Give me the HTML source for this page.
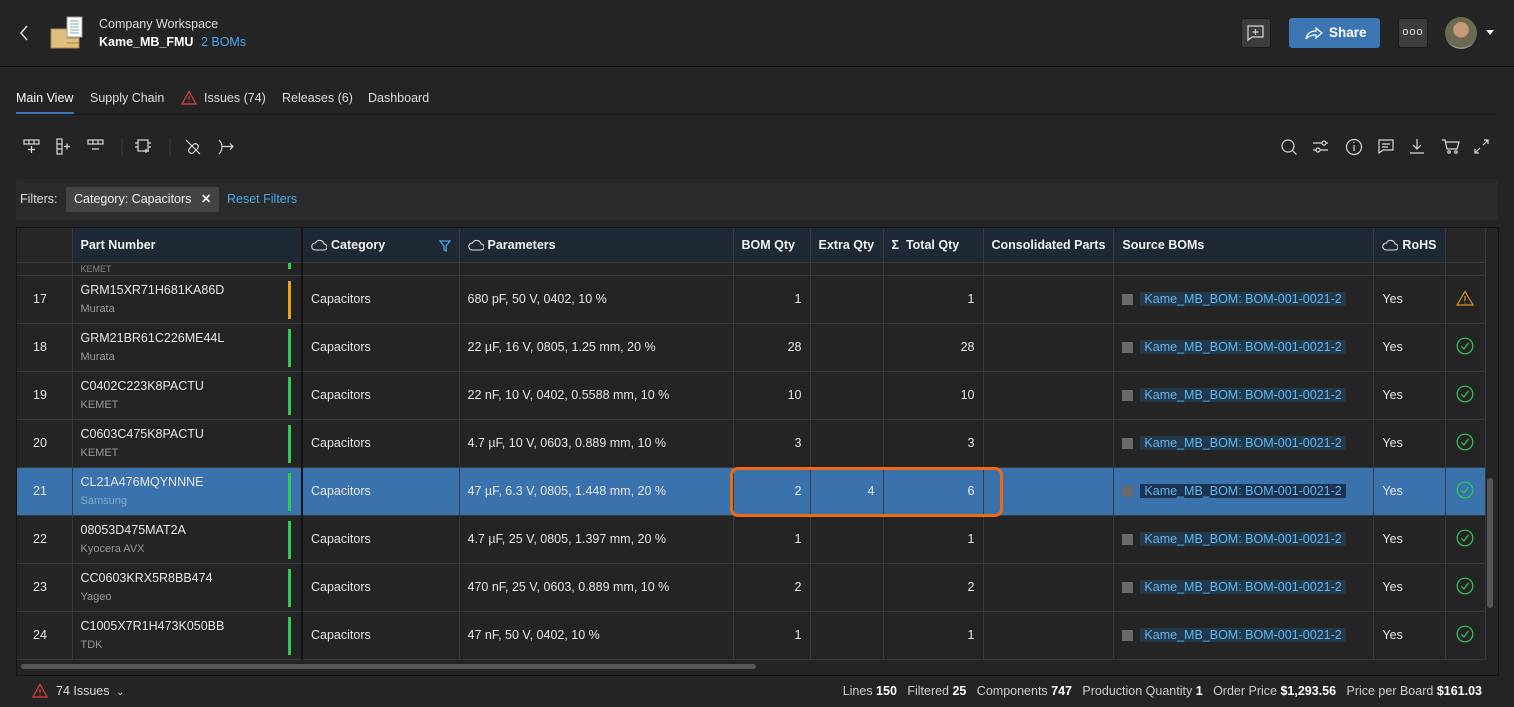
<!DOCTYPE html>
<html><head><meta charset="utf-8"><style>
*{box-sizing:border-box;margin:0;padding:0}
body{width:1514px;height:707px;background:#242424;font-family:"Liberation Sans",sans-serif;color:#e6e6e6;font-size:12.5px;position:relative;overflow:hidden}
.a{position:absolute}
.ib{stroke:#d8d8d8;fill:none;stroke-width:1.2}
table{border-collapse:collapse;table-layout:fixed;position:absolute;left:17px;top:228px}
td,th{border-right:1px solid #3a3a3a;border-bottom:1px solid #3a3a3a;white-space:nowrap;overflow:hidden;padding:0 8px;text-align:left}
th{height:34px;background:#1f2935;font-weight:bold;font-size:12.5px;color:#f0f0f0}
td{height:48px;font-size:12.5px}
td:first-child{padding-left:16px}
tr.p td{height:13px}
.r{text-align:right}
.pn{position:relative}
.pn div.m{color:#999;font-size:11px;margin-top:6px}
.bar{position:absolute;right:10px;top:5px;width:3px;height:38px;background:#2ecc55}
.src{display:flex;align-items:center}
.sq{width:11px;height:11px;background:#6a6a6a;margin-right:7px}
.lk{background:#24384c;color:#5cb8f0;padding:0 4px;line-height:14px}
tr.sel td{background:#3a72ad}
tr.sel .lk{background:#1e3350}
.cl{display:inline-block;vertical-align:-2px;margin-right:4px}
</style></head><body>
<svg width="0" height="0" style="position:absolute"><defs>
<symbol id="ok" viewBox="0 0 18 18"><circle cx="9" cy="9" r="7.8" fill="none" stroke="#2ecc55" stroke-width="1.2"/><path d="M5.5 9.5l2.5 2.5 4.5-6" fill="none" stroke="#2ecc55" stroke-width="1.2"/></symbol>
<symbol id="cloud" viewBox="0 0 16 12"><path d="M4 11h9a3 3 0 000-6 4.5 4.5 0 00-8.5-1A3.5 3.5 0 004 11z" fill="none" stroke="#ddd" stroke-width="1.1"/></symbol>
</defs></svg>
<!-- top header -->
<svg class="a" style="left:18px;top:24px" width="12" height="18"><path d="M9 2L3 9l6 7" stroke="#ddd" fill="none" stroke-width="1.5"/></svg>
<svg class="a" style="left:50px;top:16px" width="34" height="34"><rect x="1" y="13" width="28" height="19" fill="#e0c080" stroke="#a88a50"/><rect x="17" y="1" width="15" height="20" fill="#fff" stroke="#999"/><path d="M20 5h9M20 8h9M20 11h9M20 14h9M20 17h9" stroke="#7aa"/><path d="M17 22h12M17 27h12" stroke="#a88a50"/></svg>
<div class="a" style="left:99px;top:17px;font-size:12.5px;color:#ddd">Company Workspace</div>
<div class="a" style="left:99px;top:35px;font-size:12.5px;font-weight:bold;color:#fff">Kame_MB_FMU <span style="color:#4aa8e8;font-weight:normal;margin-left:4px">2 BOMs</span></div>
<div class="a" style="left:1241px;top:18px;width:30px;height:30px;background:#3c3c3c;border-radius:3px;border:1px solid #1a1a1a"></div>
<svg class="a" style="left:1246px;top:24px" width="20" height="18"><path d="M2 2h15v11H6l-4 3z" class="ib"/><path d="M9.5 5v6M6.5 8h6" class="ib"/></svg>
<div class="a" style="left:1289px;top:18px;width:91px;height:30px;background:#3b76b2;border-radius:3px;color:#fff;font-weight:bold;font-size:13.5px;line-height:30px;padding-left:40px">Share</div>
<svg class="a" style="left:1304px;top:25px" width="20" height="16"><path d="M2 14c1-6 5-8 10-8V3l6 5-6 5V10C7 10 4 11 2 14z" stroke="#fff" fill="none" stroke-width="1.2"/></svg>
<div class="a" style="left:1398px;top:18px;width:30px;height:30px;background:#3c3c3c;border-radius:3px;border:1px solid #1a1a1a;color:#ddd;text-align:center;line-height:26px;font-size:11px;letter-spacing:1px">ooo</div>
<div class="a" style="left:1445px;top:17px;width:32px;height:32px;border-radius:50%;background:radial-gradient(circle at 50% 40%,#c89878 0 30%,#6a6a52 32% 70%,#999 72%)"></div>
<div class="a" style="left:1486px;top:30px;border:4px solid transparent;border-top:5px solid #eee"></div>
<div class="a" style="left:0;top:66px;width:1514px;height:1px;background:#111"></div>
<!-- tabs -->
<div class="a" style="left:16px;top:91px;font-size:12.5px;color:#fff">Main View</div>
<div class="a" style="left:16px;top:112px;width:58px;height:2px;background:#3b76b2"></div>
<div class="a" style="left:90px;top:91px;color:#ddd">Supply Chain</div>
<svg class="a" style="left:181px;top:90px" width="16" height="15"><path d="M8 1.5L15 14H1z" stroke="#e04040" fill="none" stroke-width="1.2"/><path d="M8 6v4M8 11.5v1" stroke="#e04040" stroke-width="1.2"/></svg>
<div class="a" style="left:204px;top:91px;color:#ddd">Issues (74)</div>
<div class="a" style="left:282px;top:91px;color:#ddd">Releases (6)</div>
<div class="a" style="left:368px;top:91px;color:#ddd">Dashboard</div>
<div class="a" style="left:16px;top:114px;width:1482px;height:1px;background:#1a1a1a"></div>
<!-- toolbar -->
<svg class="a" style="left:22px;top:137px" width="220" height="20">
<g class="ib"><rect x="2" y="3" width="15" height="4"/><path d="M7 3v4M12 3v4M9.5 9v7M6 12.5h7"/>
<rect x="35" y="2" width="5" height="15"/><path d="M35 7h5M35 12h5M42 9.5h6M45 6.5v6"/>
<rect x="66" y="3" width="15" height="4"/><path d="M71 3v4M76 3v4M70 12h7"/>
<rect x="116" y="3" width="10" height="11"/><path d="M113 6h3M113 10h3M126 6h3M126 10h3M124 16v-4M121 14h6"/>
<path d="M167 12l5-5a3 3 0 014 4l-5 5a3 3 0 01-4-4zM164 3l14 14"/>
<path d="M197 3c2 2 3 4 3 6.5M197 17c2-2 3-4 3-7.5M200 9.5h11M208 6.5l3 3-3 3"/></g>
<path d="M100 1v20M148 1v20" stroke="#3a3a3a"/></svg>
<svg class="a" style="left:1278px;top:136px" width="216" height="22"><g class="ib">
<circle cx="10" cy="10" r="6"/><path d="M14.5 14.5l4 4"/>
<path d="M35 7h15M35 14h15"/><circle cx="46" cy="7" r="2" fill="#242424"/><circle cx="40" cy="14" r="2" fill="#242424"/>
<circle cx="76" cy="11" r="7.5"/><path d="M76 9v6M76 6v1"/>
<path d="M101 4h14v10h-10l-4 3zM104 8h8M104 11h6"/>
<path d="M139 3v10M135 9l4 4 4-4M132 17h14"/>
<path d="M164 4h3l2 9h10l2-7h-13"/><circle cx="171" cy="16" r="1.2"/><circle cx="178" cy="16" r="1.2"/>
<path d="M197 17l5-5M197 13v4h4M210 4l-5 5M210 8V4h-4"/></g></svg>
<!-- filters -->
<div class="a" style="left:16px;top:179px;width:1482px;height:41px;background:#2a2a2a;border-radius:3px"></div>
<div class="a" style="left:20px;top:192px;color:#ddd">Filters:</div>
<div class="a" style="left:66px;top:187px;width:153px;height:25px;background:#444;border-radius:2px;color:#eee;line-height:25px;padding-left:8px">Category: Capacitors <span style="margin-left:6px;font-weight:bold">✕</span></div>
<div class="a" style="left:227px;top:192px;color:#4aa8e8">Reset Filters</div>
<!-- table area -->
<div class="a" style="left:16px;top:227px;width:1483px;height:449px;border:1px solid #141414;background:#242424"></div>
<table>
<colgroup><col style="width:55px"><col style="width:230px"><col style="width:157px"><col style="width:274px"><col style="width:77px"><col style="width:73px"><col style="width:100px"><col style="width:128px"><col style="width:260px"><col style="width:72px"><col style="width:40px"></colgroup>
<tr><th style="background:#262626"></th><th style="border-right:2px solid #141414">Part Number</th><th><svg class="cl" width="16" height="12"><use href="#cloud"/></svg>Category <svg style="float:right;margin-top:2px" width="12" height="12"><path d="M1 1h10L7 6v5l-2-1V6z" fill="none" stroke="#4aa8e8" stroke-width="1.2"/></svg></th><th><svg class="cl" width="16" height="12"><use href="#cloud"/></svg>Parameters</th><th>BOM Qty</th><th>Extra Qty</th><th>Σ&nbsp; Total Qty</th><th>Consolidated Parts</th><th>Source BOMs</th><th><svg class="cl" width="16" height="12"><use href="#cloud"/></svg>RoHS</th><th style="background:#262626"></th></tr>
<tr class="p"><td></td><td style="border-right:2px solid #141414;font-size:9px;color:#888;position:relative">KEMET<div style="position:absolute;right:10px;top:0;width:3px;height:6px;background:#2ecc55"></div></td><td></td><td></td><td></td><td></td><td></td><td></td><td></td><td></td><td></td></tr>
<tr><td>17</td><td class="pn" style="border-right:2px solid #141414">GRM15XR71H681KA86D<div class="m">Murata</div><div class="bar" style="background:#f0a020"></div></td><td>Capacitors</td><td>680 pF, 50 V, 0402, 10 %</td><td class="r">1</td><td></td><td class="r">1</td><td></td><td><div class="src"><div class="sq"></div><span class="lk">Kame_MB_BOM: BOM-001-0021-2</span></div></td><td>Yes</td><td><svg width="18" height="16" style="margin-left:2px"><path d="M9 1.5L17 15H1z" fill="none" stroke="#e09020" stroke-width="1.2"/><path d="M9 6v5M9 12.5v1" stroke="#e09020" stroke-width="1.2"/></svg></td></tr>
<tr><td>18</td><td class="pn" style="border-right:2px solid #141414">GRM21BR61C226ME44L<div class="m">Murata</div><div class="bar"></div></td><td>Capacitors</td><td>22 µF, 16 V, 0805, 1.25 mm, 20 %</td><td class="r">28</td><td></td><td class="r">28</td><td></td><td><div class="src"><div class="sq"></div><span class="lk">Kame_MB_BOM: BOM-001-0021-2</span></div></td><td>Yes</td><td><svg width="18" height="18" style="margin-left:2px"><use href="#ok"/></svg></td></tr>
<tr><td>19</td><td class="pn" style="border-right:2px solid #141414">C0402C223K8PACTU<div class="m">KEMET</div><div class="bar"></div></td><td>Capacitors</td><td>22 nF, 10 V, 0402, 0.5588 mm, 10 %</td><td class="r">10</td><td></td><td class="r">10</td><td></td><td><div class="src"><div class="sq"></div><span class="lk">Kame_MB_BOM: BOM-001-0021-2</span></div></td><td>Yes</td><td><svg width="18" height="18" style="margin-left:2px"><use href="#ok"/></svg></td></tr>
<tr><td>20</td><td class="pn" style="border-right:2px solid #141414">C0603C475K8PACTU<div class="m">KEMET</div><div class="bar"></div></td><td>Capacitors</td><td>4.7 µF, 10 V, 0603, 0.889 mm, 10 %</td><td class="r">3</td><td></td><td class="r">3</td><td></td><td><div class="src"><div class="sq"></div><span class="lk">Kame_MB_BOM: BOM-001-0021-2</span></div></td><td>Yes</td><td><svg width="18" height="18" style="margin-left:2px"><use href="#ok"/></svg></td></tr>
<tr class="sel"><td>21</td><td class="pn" style="border-right:2px solid #141414">CL21A476MQYNNNE<div class="m" style="color:#8aa8c8">Samsung</div><div class="bar"></div></td><td>Capacitors</td><td>47 µF, 6.3 V, 0805, 1.448 mm, 20 %</td><td class="r">2</td><td class="r">4</td><td class="r">6</td><td></td><td><div class="src"><div class="sq"></div><span class="lk">Kame_MB_BOM: BOM-001-0021-2</span></div></td><td>Yes</td><td><svg width="18" height="18" style="margin-left:2px"><use href="#ok"/></svg></td></tr>
<tr><td>22</td><td class="pn" style="border-right:2px solid #141414">08053D475MAT2A<div class="m">Kyocera AVX</div><div class="bar"></div></td><td>Capacitors</td><td>4.7 µF, 25 V, 0805, 1.397 mm, 20 %</td><td class="r">1</td><td></td><td class="r">1</td><td></td><td><div class="src"><div class="sq"></div><span class="lk">Kame_MB_BOM: BOM-001-0021-2</span></div></td><td>Yes</td><td><svg width="18" height="18" style="margin-left:2px"><use href="#ok"/></svg></td></tr>
<tr><td>23</td><td class="pn" style="border-right:2px solid #141414">CC0603KRX5R8BB474<div class="m">Yageo</div><div class="bar"></div></td><td>Capacitors</td><td>470 nF, 25 V, 0603, 0.889 mm, 10 %</td><td class="r">2</td><td></td><td class="r">2</td><td></td><td><div class="src"><div class="sq"></div><span class="lk">Kame_MB_BOM: BOM-001-0021-2</span></div></td><td>Yes</td><td><svg width="18" height="18" style="margin-left:2px"><use href="#ok"/></svg></td></tr>
<tr><td>24</td><td class="pn" style="border-right:2px solid #141414">C1005X7R1H473K050BB<div class="m">TDK</div><div class="bar"></div></td><td>Capacitors</td><td>47 nF, 50 V, 0402, 10 %</td><td class="r">1</td><td></td><td class="r">1</td><td></td><td><div class="src"><div class="sq"></div><span class="lk">Kame_MB_BOM: BOM-001-0021-2</span></div></td><td>Yes</td><td><svg width="18" height="18" style="margin-left:2px"><use href="#ok"/></svg></td></tr>
</table>
<div class="a" style="left:730px;top:467px;width:273px;height:50px;border:3px solid #f06a10;border-radius:8px"></div>
<div class="a" style="left:1487px;top:478px;width:6px;height:130px;background:#555;border-radius:3px"></div>
<div class="a" style="left:21px;top:664px;width:735px;height:5px;background:#555;border-radius:3px"></div>
<!-- footer -->
<svg class="a" style="left:32px;top:683px" width="16" height="15"><path d="M8 1.5L15 14H1z" stroke="#e04040" fill="none" stroke-width="1.2"/><path d="M8 6v4M8 11.5v1" stroke="#e04040" stroke-width="1.2"/></svg>
<div class="a" style="left:56px;top:684px;color:#ddd">74 Issues <span style="font-size:10px;margin-left:3px">⌄</span></div>
<div class="a" style="right:32px;top:684px;color:#ccc;white-space:nowrap">Lines <b style="color:#fff">150</b>&nbsp;&nbsp; Filtered <b style="color:#fff">25</b>&nbsp;&nbsp; Components <b style="color:#fff">747</b>&nbsp;&nbsp; Production Quantity <b style="color:#fff">1</b>&nbsp;&nbsp; Order Price <b style="color:#fff">$1,293.56</b>&nbsp;&nbsp; Price per Board <b style="color:#fff">$161.03</b></div>
</body></html>
